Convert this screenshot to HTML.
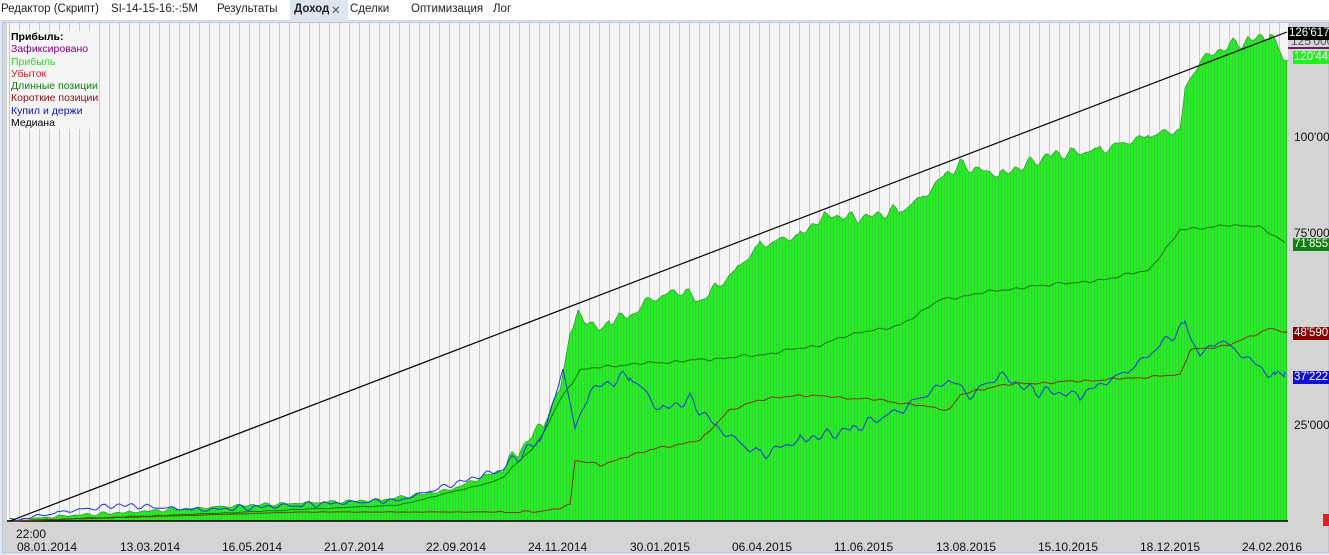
<!DOCTYPE html>
<html><head><meta charset="utf-8"><style>
body{margin:0;width:1329px;height:555px;overflow:hidden;background:#dfe6ee;font-family:"Liberation Sans",sans-serif;font-size:12px;position:relative}
.tabs{position:absolute;left:0;top:0;width:1329px;height:20px;background:#fff;border-bottom:1px solid #c9d6e3}
.tabs span{position:absolute;top:3px;color:#222;font-size:11.5px}
.act{position:absolute;left:290px;top:0;width:58px;height:21px;background:#dde6ef}
.chart{position:absolute;left:2px;top:22px;width:1327px;height:531px;background:#d4d4d4;border:1px solid #b6c8da;box-sizing:border-box}
.legend{position:absolute;left:11px;top:31px;line-height:12.3px;font-size:10.5px;background:#f4f4f4}
.ax{position:absolute;font-size:12px;color:#111}
.lbl{position:absolute;left:1293px;width:40px;height:13px;font-size:11.5px;line-height:13px;color:#fff;padding-left:1px;white-space:nowrap;overflow:hidden}
</style></head><body>
<div class="tabs"><div class="act"></div>
<span style="left:1px">Редактор (Скрипт)</span>
<span style="left:111px">SI-14-15-16:-:5M</span>
<span style="left:217px">Результаты</span>
<span style="left:294px;font-weight:bold">Доход</span><span style="left:331px;color:#555">✕</span>
<span style="left:350px">Сделки</span>
<span style="left:411px">Оптимизация</span>
<span style="left:493px">Лог</span>
</div>
<div class="chart"></div>
<svg id="s" style="position:absolute;left:0;top:0" width="1329" height="555">
<defs>
<pattern id="g" width="10" height="10" patternUnits="userSpaceOnUse"><rect width="10" height="10" fill="#f5f5f5"/><rect x="9" width="1" height="10" fill="#c8c8c8"/></pattern>
<pattern id="b" width="3" height="10" patternUnits="userSpaceOnUse"><rect width="3" height="10" fill="#22f022"/><rect x="2" width="1" height="10" fill="#3acc3a"/></pattern>
</defs>
<rect x="7" y="23" width="1281" height="498" fill="url(#g)"/>
<polygon id="gr" fill="url(#b)" stroke="#2a8a2a" stroke-width="0.6" points=""/>
<line x1="7" y1="521" x2="1288" y2="521" stroke="#000" stroke-width="1.5"/>
<polyline id="ln" fill="none" stroke="#0a7a0a" points=""/>
<polyline id="sh" fill="none" stroke="#7a3a00" points=""/>
<polyline id="bl" fill="none" stroke="#1a3ad0" points=""/>
<line x1="10" y1="521" x2="1287" y2="32" stroke="#000" stroke-width="1.2"/>
</svg>
<script>
function P(s){return s.trim().split(/\s+/).map(p=>p.split(',').map(Number));}
function interp(pts,step,amp,seed,early){var out=[];for(var i=0;i<pts.length-1;i++){var a=pts[i],b=pts[i+1];for(var x=a[0];x<b[0];x+=step){var t=(x-a[0])/(b[0]-a[0]);var y=a[1]+(b[1]-a[1])*t;var n=Math.sin(x*0.37+seed)*Math.sin(x*0.091+seed*2)*amp+Math.sin(x*1.7+seed)*amp*0.4;if(x<500)n*=early;out.push([x,y+n]);}}out.push(pts[pts.length-1]);return out;}
function str(a){return a.map(p=>p[0].toFixed(1)+','+p[1].toFixed(1)).join(' ');}
var G=P("10,521 60,516 130,512 250,505 380,500 450,490 500,470 520,450 545,420 560,390 570,330 578,315 590,322 600,330 610,320 630,315 650,300 680,290 700,300 720,285 740,265 760,245 800,235 825,215 860,218 900,210 920,200 945,175 960,165 1000,175 1050,155 1100,150 1150,135 1180,130 1185,90 1200,60 1230,45 1250,40 1270,35 1280,50 1287,60");
var g=interp(G,3,5,1,0.3);document.getElementById('gr').setAttribute('points',str(g)+' 1287,521');
document.getElementById('ln').setAttribute('points',str(interp(P("10,521 200,514 400,505 500,480 540,440 560,400 580,370 620,365 700,360 760,355 820,345 850,335 900,325 940,300 1000,290 1050,285 1100,280 1150,270 1180,230 1230,225 1260,227 1285,243"),4,1.5,3,0.3)));
document.getElementById('sh').setAttribute('points',str(interp(P("10,521 300,512 540,512 570,505 575,460 600,465 650,450 700,440 730,410 760,400 800,395 880,400 950,410 960,395 1000,385 1100,380 1180,375 1190,350 1230,345 1270,328 1287,333"),4,1.2,5,0.2)));
document.getElementById('bl').setAttribute('points',str(interp(P("10,521 60,512 120,505 200,510 300,505 400,500 500,470 540,440 555,400 563,365 575,430 590,390 630,375 660,410 690,400 720,430 760,455 800,440 850,430 900,410 950,380 970,395 1000,375 1030,390 1080,395 1130,370 1185,325 1200,355 1220,340 1250,360 1275,378 1285,372"),3,5,7,0.5)));
</script>
<div class="legend">
<div style="font-weight:bold;color:#000">Прибыль:</div>
<div style="color:#800080">Зафиксировано</div>
<div style="color:#22dd22">Прибыль</div>
<div style="color:#d02020">Убыток</div>
<div style="color:#108010">Длинные позиции</div>
<div style="color:#8a1010">Короткие позиции</div>
<div style="color:#1010a0">Купил и держи</div>
<div style="color:#000">Медиана</div>
</div>
<div class="ax" style="left:1294px;top:130px">100'000</div>
<div class="ax" style="left:1294px;top:226px">75'000</div>
<div class="ax" style="left:1294px;top:418px">25'000</div>
<div class="ax" style="left:1291px;top:34px;color:#555">125'000</div>
<div class="lbl" style="top:27px;background:#000;left:1288px">126'617</div>
<div style="position:absolute;left:1288px;top:47px;width:41px;height:2px;background:#7a1a6a"></div>
<div class="lbl" style="top:51px;background:#22ee22">120'445</div>
<div class="lbl" style="top:238px;background:#108010">71'855</div>
<div class="lbl" style="top:327px;background:#8a0000">48'590</div>
<div class="lbl" style="top:371px;background:#1010d0">37'222</div>
<div style="position:absolute;left:1323px;top:514px;width:6px;height:12px;background:#e02020"></div>
<div class="ax" style="left:16px;top:527px">22:00</div>
<div class="ax" style="top:540px;left:17px">08.01.2014</div>
<div class="ax" style="top:540px;left:120px">13.03.2014</div>
<div class="ax" style="top:540px;left:222px">16.05.2014</div>
<div class="ax" style="top:540px;left:324px">21.07.2014</div>
<div class="ax" style="top:540px;left:426px">22.09.2014</div>
<div class="ax" style="top:540px;left:528px">24.11.2014</div>
<div class="ax" style="top:540px;left:630px">30.01.2015</div>
<div class="ax" style="top:540px;left:732px">06.04.2015</div>
<div class="ax" style="top:540px;left:834px">11.06.2015</div>
<div class="ax" style="top:540px;left:936px">13.08.2015</div>
<div class="ax" style="top:540px;left:1038px">15.10.2015</div>
<div class="ax" style="top:540px;left:1140px">18.12.2015</div>
<div class="ax" style="top:540px;left:1242px">24.02.2016</div>
</body></html>
